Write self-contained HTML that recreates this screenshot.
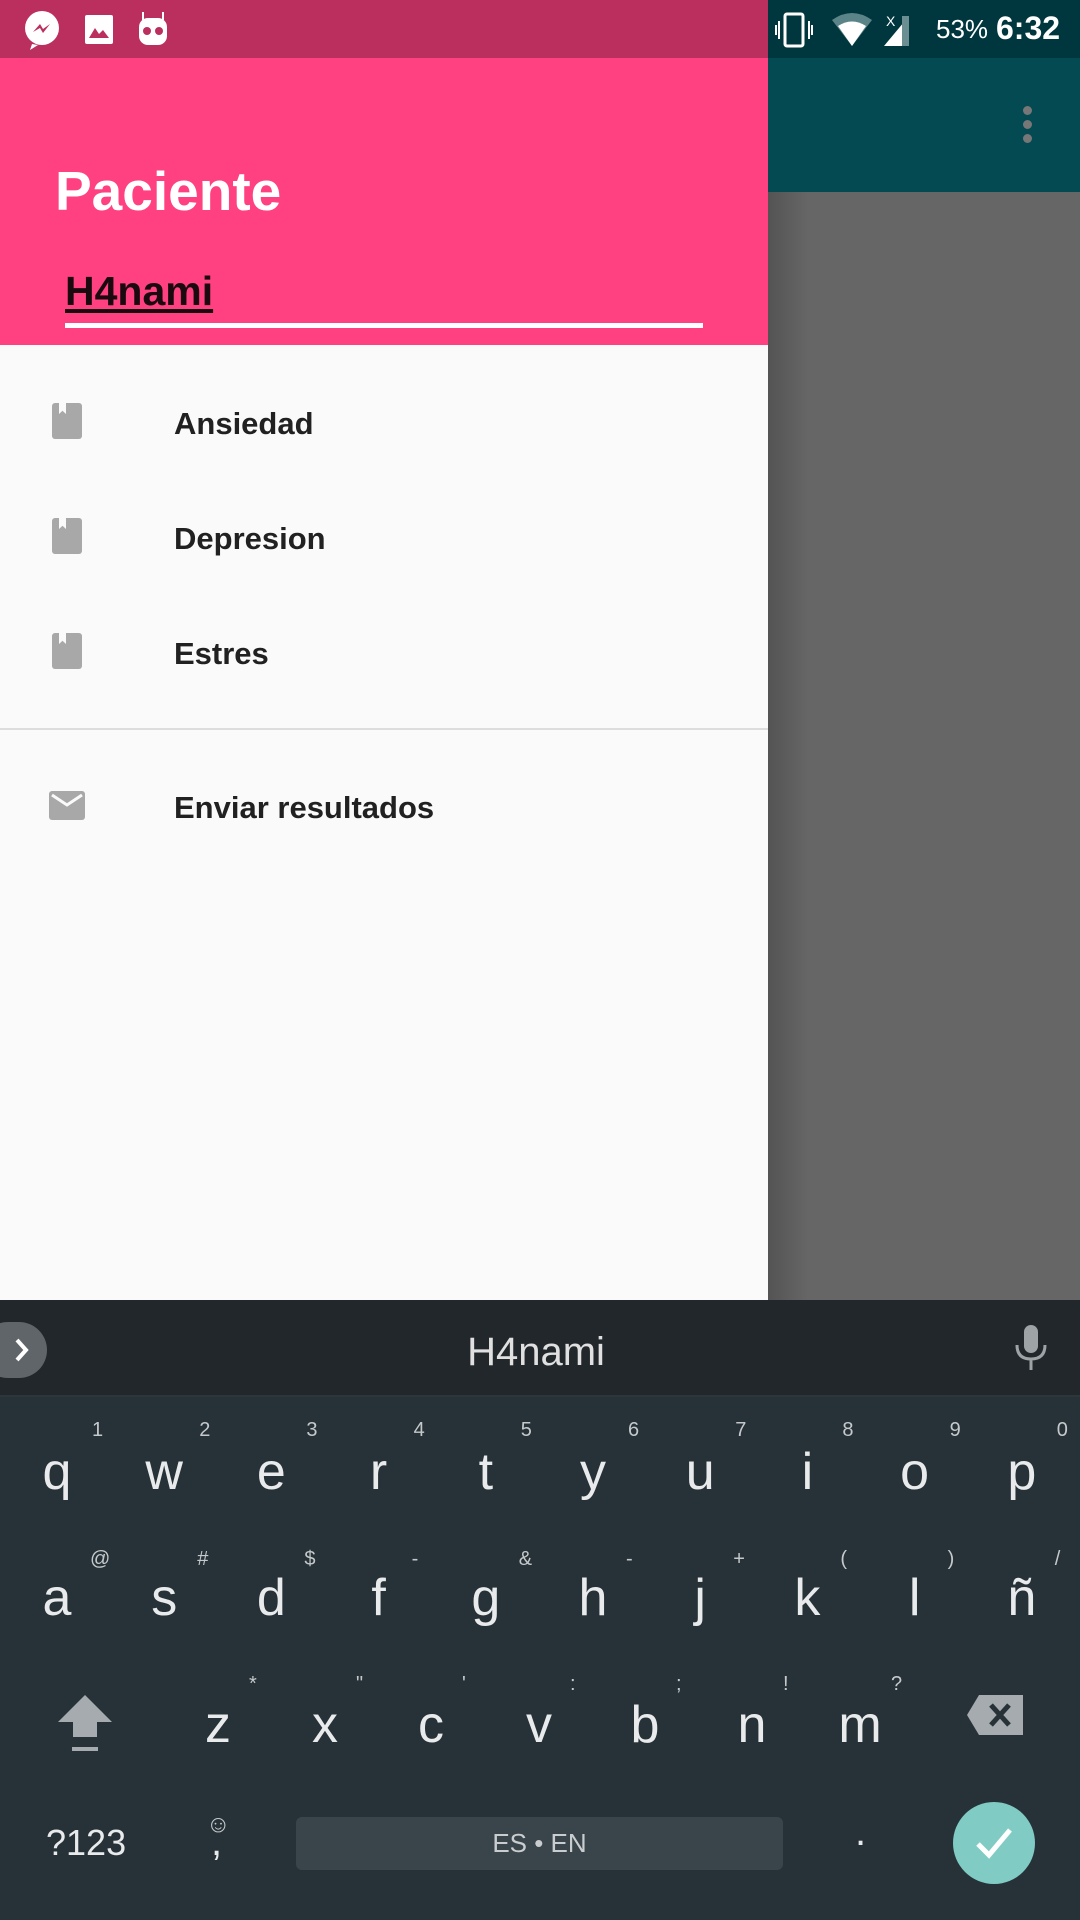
<!DOCTYPE html>
<html><head><meta charset="utf-8"><style>
*{margin:0;padding:0;box-sizing:border-box}
body{width:1080px;height:1920px;position:relative;overflow:hidden;font-family:"Liberation Sans",sans-serif;background:#666}
.abs{position:absolute}
.item{position:absolute;left:174px;font-size:31px;color:#212121;font-weight:bold;line-height:1}
.bm{position:absolute;left:52px;width:30px;height:36px;background:#a8a8a8;border-radius:3px}
.bm:after{content:"";position:absolute;left:7px;top:0;width:7px;height:11px;background:#fafafa;clip-path:polygon(0 0,100% 0,100% 100%,50% 70%,0 100%)}
.k{position:absolute;color:#e8eaeb;font-size:52px;width:80px;text-align:center;line-height:1}
.h{position:absolute;color:#c5c9cb;font-size:20px;line-height:1}
</style></head><body>
<div class="abs" style="left:0;top:0;width:768px;height:58px;background:#bb2f5e"></div>
<div class="abs" style="left:768px;top:0;width:312px;height:58px;background:#00363d"></div>
<svg class="abs" style="left:22px;top:10px" width="160" height="40" viewBox="0 0 160 40">
<circle cx="20" cy="18" r="17" fill="#fff"/><path d="M10 34 L8 40 L16 35Z" fill="#fff"/><path d="M11 22 L18 14 L21 19 L28 14 L21 23 L18 18Z" fill="#bb2f5e"/>
<rect x="63" y="5" width="28" height="29" rx="2" fill="#fff"/><path d="M67 28 L73 18 L77 24 L81 20 L87 28Z" fill="#bb2f5e"/>
<path d="M121 2 V10 M141 2 V10" stroke="#fff" stroke-width="2"/><rect x="117" y="8" width="28" height="27" rx="9" fill="#fff"/><circle cx="125" cy="21" r="4" fill="#bb2f5e"/><circle cx="137" cy="21" r="4" fill="#bb2f5e"/>
</svg>
<svg class="abs" style="left:774px;top:12px" width="160" height="36" viewBox="0 0 160 36">
<rect x="11" y="2" width="18" height="32" rx="2" fill="none" stroke="#fff" stroke-width="3"/><path d="M5 9V27M2 13V23M35 9V27M38 13V23" stroke="#fff" stroke-width="2"/>
<path d="M58 8 Q78 -6 98 8 L78 34Z" fill="#5b8488"/><path d="M64 14 Q78 5 92 14 L78 34Z" fill="#fff"/>
<path d="M135 4 L135 34 L110 34Z" fill="#fff"/><path d="M128 4 V34 L135 34 V4Z" fill="#6b8e92"/><text x="112" y="14" font-size="14" fill="#fff" font-family="Liberation Sans">X</text>
</svg>
<div class="abs" style="left:936px;top:14px;color:#fff;font-size:26px">53%</div>
<div class="abs" style="left:996px;top:10px;color:#fff;font-size:32px;font-weight:bold">6:32</div>
<div class="abs" style="left:768px;top:58px;width:312px;height:134px;background:#044a52"></div>
<div class="abs" style="left:1023px;top:106px;width:9px;height:9px;border-radius:50%;background:#777"></div>
<div class="abs" style="left:1023px;top:120px;width:9px;height:9px;border-radius:50%;background:#777"></div>
<div class="abs" style="left:1023px;top:134px;width:9px;height:9px;border-radius:50%;background:#777"></div>
<div class="abs" style="left:768px;top:192px;width:40px;height:1108px;background:linear-gradient(90deg,rgba(0,0,0,.18),rgba(0,0,0,0))"></div>
<div class="abs" style="left:0;top:58px;width:768px;height:287px;background:#ff4081"></div>
<div class="abs" style="left:55px;top:164px;color:#fff;font-size:55px;font-weight:bold;line-height:1">Paciente</div>
<div class="abs" style="left:65px;top:271px;color:#1a0a10;font-size:41px;font-weight:bold;line-height:1;text-decoration:underline;text-underline-offset:4px">H4nami</div>
<div class="abs" style="left:65px;top:323px;width:638px;height:5px;background:#fff"></div>
<div class="abs" style="left:0;top:345px;width:768px;height:955px;background:#fafafa"></div>
<div class="bm" style="top:403px"></div><div class="item" style="top:408px">Ansiedad</div>
<div class="bm" style="top:518px"></div><div class="item" style="top:523px">Depresion</div>
<div class="bm" style="top:633px"></div><div class="item" style="top:638px">Estres</div>
<div class="abs" style="left:0;top:728px;width:768px;height:2px;background:#ddd"></div>
<svg class="abs" style="left:49px;top:791px" width="36" height="29" viewBox="0 0 36 29"><rect width="36" height="29" rx="3" fill="#a8a8a8"/><path d="M3 4 L18 14 L33 4" fill="none" stroke="#fafafa" stroke-width="3"/></svg>
<div class="item" style="top:792px">Enviar resultados</div>
<div class="abs" style="left:0;top:1300px;width:1080px;height:96px;background:#21272b"></div>
<div class="abs" style="left:0;top:1395px;width:1080px;height:2px;background:#2d363b"></div>
<div class="abs" style="left:0;top:1397px;width:1080px;height:523px;background:#263238"></div>
<div class="abs" style="left:-20px;top:1322px;width:67px;height:56px;border-radius:28px;background:#5f6568"></div>
<svg class="abs" style="left:12px;top:1336px" width="20" height="28"><path d="M5 4 L14 14 L5 24" fill="none" stroke="#fff" stroke-width="4"/></svg>
<div class="abs" style="left:436px;top:1330px;width:200px;text-align:center;color:#e0e0e0;font-size:40px">H4nami</div>
<svg class="abs" style="left:1013px;top:1325px" width="36" height="48"><rect x="11" y="0" width="14" height="28" rx="7" fill="#9ea3a6"/><path d="M4 20 Q4 34 18 34 Q32 34 32 20 M18 34 V45" fill="none" stroke="#9ea3a6" stroke-width="3"/></svg>
<div id="kb"></div>
<div class="abs" style="left:46px;top:1822px;color:#e8eaeb;font-size:36px">?123</div>
<div class="abs" style="left:206px;top:1811px;color:#c5c9cb;font-size:24px">☺</div>
<div class="abs" style="left:211px;top:1820px;color:#e8eaeb;font-size:40px">,</div>
<div class="abs" style="left:296px;top:1817px;width:487px;height:53px;border-radius:6px;background:#3a454b;color:#c9cdcf;font-size:26px;text-align:center;line-height:53px">ES • EN</div>
<div class="abs" style="left:855px;top:1810px;color:#e8eaeb;font-size:40px">.</div>
<div class="abs" style="left:953px;top:1802px;width:82px;height:82px;border-radius:50%;background:#80cbc4"></div>
<svg class="abs" style="left:972px;top:1820px" width="44" height="44"><path d="M6 24 L17 35 L38 10" fill="none" stroke="#fff" stroke-width="5"/></svg>
<svg class="abs" style="left:54px;top:1693px" width="62" height="62"><path d="M31 2 L58 29 H43 V44 H19 V29 H4Z" fill="#a5abae"/><rect x="18" y="54" width="26" height="4" fill="#a5abae"/></svg>
<svg class="abs" style="left:965px;top:1693px" width="60" height="44"><path d="M14 2 H58 V42 H14 L2 22Z" fill="#a5abae"/><path d="M26 12 L44 32 M44 12 L26 32" stroke="#263238" stroke-width="5"/></svg>
<script>
var r1="qwertyuiop",h1="1234567890",r2="asdfghjklñ",h2="@#$-&-+()/";
var r3="zxcvbnm",h3="*\"':;!?",x3=[218,325,431,539,645,752,860];
var s="";
for(var i=0;i<10;i++){var cx=57+i*107.2;
s+='<div class="k" style="left:'+(cx-40)+'px;top:1446px">'+r1[i]+'</div><div class="h" style="left:'+(cx+35)+'px;top:1420px">'+h1[i]+'</div>';
s+='<div class="k" style="left:'+(cx-40)+'px;top:1572px">'+r2[i]+'</div><div class="h" style="left:'+(cx+33)+'px;top:1549px">'+h2[i]+'</div>';}
for(var j=0;j<7;j++){var c=x3[j];
s+='<div class="k" style="left:'+(c-40)+'px;top:1699px">'+r3[j]+'</div><div class="h" style="left:'+(c+31)+'px;top:1674px">'+h3[j]+'</div>';}
document.getElementById("kb").innerHTML=s;
</script>
</body></html>
